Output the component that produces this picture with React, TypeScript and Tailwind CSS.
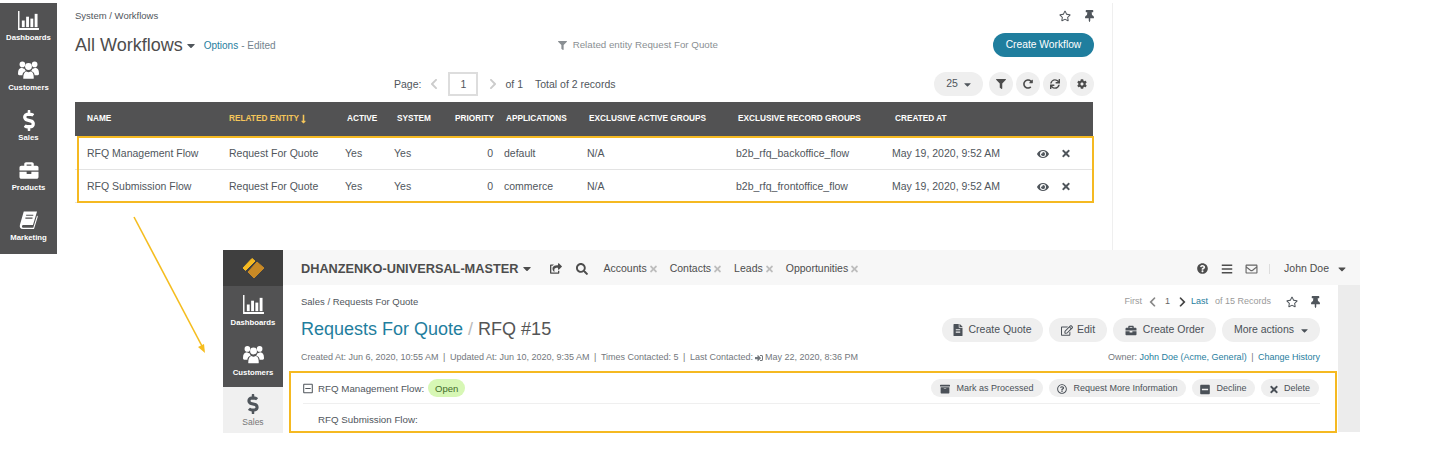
import {
  FaArchive,
  FaBars,
  FaBriefcase,
  FaCaretDown,
  FaChevronLeft,
  FaChevronRight,
  FaCog,
  FaDollarSign,
  FaEye,
  FaFileAlt,
  FaFilter,
  FaLongArrowAltDown,
  FaMinusSquare,
  FaQuestionCircle,
  FaRedoAlt,
  FaRegEdit,
  FaRegEnvelope,
  FaRegMinusSquare,
  FaRegQuestionCircle,
  FaRegStar,
  FaSearch,
  FaShareSquare,
  FaSignInAlt,
  FaSync,
  FaThumbtack,
  FaTimes,
} from 'react-icons/fa';

const ChartIcon = ({ className }: { className?: string }) => (
  <svg className={className} viewBox="0 0 22 20" fill="currentColor">
    <path d="M0 0h1.5v18H22v2H0z" />
    <rect x="4" y="10" width="3" height="7" />
    <rect x="8.5" y="6" width="3" height="11" />
    <rect x="13" y="8" width="3" height="9" />
    <rect x="17.5" y="3" width="3" height="14" />
  </svg>
);

const UsersIcon = ({ className }: { className?: string }) => (
  <svg className={className} viewBox="0 0 24 20" fill="currentColor">
    <circle cx="5" cy="3.6" r="3.2" />
    <circle cx="19" cy="3.6" r="3.2" />
    <circle cx="12" cy="6" r="3.9" />
    <path d="M0 14c0-4 1.5-6.500 4.500-6.500 1 .8 2 1.200 3 1.200.3 1 .8 1.800 1.500 2.500C6.500 12 5.200 13.500 5 16H1.500C.5 16 0 15 0 14z" />
    <path d="M24 14c0-4-1.500-6.500-4.500-6.500-1 .8-2 1.200-3 1.200-.3 1-.8 1.800-1.500 2.500 2.500.8 3.800 2.300 4 4.800h3.500c1 0 1.500-1 1.500-2z" />
    <path d="M6.500 20c-.5 0-.5-.5-.5-1 0-4 1.300-7 3.800-7.300 1.400 1 3 1 4.400 0C17.200 12 18 15 18 19c0 .5 0 1-.5 1z" />
  </svg>
);

const BookIcon = ({ className }: { className?: string }) => (
  <svg className={className} viewBox="0 0 20 20" fill="currentColor">
    <path d="M5 .5h14l-4.300 14.200H4.500c-1.800 0-1.800 3 .2 3H15l4-13 .8 1-4 13.300H4.200C1.300 19 .3 16.800 1 14.500z" />
    <path d="M7.500 4.500h7.500M6.700 7.500h7.500" stroke="#525253" strokeWidth="1.200" />
  </svg>
);

const Logo = () => (
  <svg width="23" height="22" viewBox="0 0 23 22">
    <path d="M10 1.500l3 2.500L3.500 13.500 1 11z" fill="#f5b921" stroke="#f5b921" strokeLinejoin="round" />
    <path d="M15 5l7 6-10 10-6-6z" fill="#c98a26" stroke="#c98a26" strokeLinejoin="round" />
  </svg>
);

const topNav = [
  { label: 'Dashboards', icon: <ChartIcon className="w-[21px] h-[19px]" />, h: 'h-[50px]' },
  { label: 'Customers', icon: <UsersIcon className="w-[21px] h-[18px]" />, h: 'h-[50px]' },
  { label: 'Sales', icon: <FaDollarSign className="w-[14px] h-[21px]" />, h: 'h-[50px]' },
  { label: 'Products', icon: <FaBriefcase className="w-[20px] h-[19px]" />, h: 'h-[50px]' },
  { label: 'Marketing', icon: <BookIcon className="w-[19px] h-[19px]" />, h: 'h-[51px]' },
];

const rows = [
  { name: 'RFQ Management Flow', app: 'default', group: 'b2b_rfq_backoffice_flow' },
  { name: 'RFQ Submission Flow', app: 'commerce', group: 'b2b_rfq_frontoffice_flow' },
];

const gridCols = 'grid grid-cols-[142px_116px_49px_50px_60px_83px_149px_156px_145px_25px_1fr]';

const RoundButton = ({ children }: { children: React.ReactNode }) => (
  <span className="w-[24px] h-[24px] rounded-full bg-[#efefef] flex items-center justify-center text-[#4c4c4c]">
    {children}
  </span>
);

const PillButton = ({ children, className }: { children: React.ReactNode; className: string }) => (
  <span className={`h-[24px] pt-[1px] rounded-full bg-[#efefef] flex items-center justify-center text-[10.5px] text-[#4b5158] ${className}`}>
    {children}
  </span>
);

const SmallAction = ({ icon, label, className }: { icon: React.ReactNode; label: string; className: string }) => (
  <span className={`h-[18px] pt-[2px] rounded-full bg-[#efefef] flex items-center justify-center gap-[6px] text-[9px] text-[#4b5158] ${className}`}>
    {icon}
    {label}
  </span>
);

const Sep = () => <span className="mx-[4.5px] text-[#777]">|</span>;

export default function App() {
  return (
    <div className="relative w-[1445px] h-[471px] bg-white overflow-hidden text-[#50565c] font-['Liberation_Sans',Arial,sans-serif]">
      {/* upper shot: workflow list */}
      <div className="flex h-[250px] pt-[3px]">
        <nav className="w-[57px] h-[251px] shrink-0 bg-[#525253] text-white flex flex-col">
          {topNav.map((item) => (
            <div key={item.label} className={`${item.h} flex flex-col items-center pt-[6px]`}>
              <span className="h-[22px] flex items-center">{item.icon}</span>
              <span className="mt-[2px] text-[7.75px] leading-[10px] font-bold">{item.label}</span>
            </div>
          ))}
        </nav>

        <main className="w-[1056px] border-r border-[#efefef] pl-[18px] pr-[18px]">
          <div className="flex justify-between items-center h-[26px]">
            <span className="text-[9.5px] mt-[1px]">System / Workflows</span>
            <span className="flex items-center gap-[14px] text-[#50565c]">
              <FaRegStar className="w-[12px] h-[12px]" />
              <FaThumbtack className="w-[9px] h-[12px]" />
            </span>
          </div>

          <div className="flex items-center h-[30px] mt-[1px]">
            <span className="text-[18px] text-[#4d4d4d]">All Workflows</span>
            <FaCaretDown className="ml-[4px] w-[8px] h-[13px]" />
            <span className="ml-[9px] text-[10px] text-[#1f7e9e]">Options</span>
            <span className="ml-[3px] text-[10px] text-[#73838e]">- Edited</span>
            <span className="ml-[282px] flex items-center gap-[6px] text-[9.75px] text-[#8a8f93]">
              <FaFilter className="w-[9px] h-[9px]" />
              Related entity Request For Quote
            </span>
            <span className="ml-auto w-[101px] h-[24px] rounded-full bg-[#1f7e9e] text-white text-[10.25px] flex items-center justify-center">
              Create Workflow
            </span>
          </div>

          <div className="flex items-center h-[24px] mt-[12px]">
            <span className="ml-[319px] pt-[2px] text-[10.5px]">Page:</span>
            <FaChevronLeft className="ml-[9px] w-[8px] h-[12px] text-[#ccc]" />
            <span className="ml-[10px] w-[30px] h-[24px] pt-[1px] border-2 border-[#ddd] text-[10.5px] flex items-center justify-center">1</span>
            <FaChevronRight className="ml-[11px] w-[8px] h-[12px] text-[#ccc]" />
            <span className="ml-[8px] pt-[2px] text-[10.5px]">of 1</span>
            <span className="ml-[12px] pt-[2px] text-[10.5px]">Total of 2 records</span>
            <span className="ml-auto w-[49px] h-[24px] rounded-full bg-[#efefef] text-[10.5px] flex items-center justify-center gap-[6px]">
              25 <FaCaretDown className="w-[7px] h-[11px]" />
            </span>
            <span className="ml-[6px] flex gap-[3px]">
              <RoundButton><FaFilter className="w-[10px] h-[10px]" /></RoundButton>
              <RoundButton><FaRedoAlt className="w-[10px] h-[10px]" /></RoundButton>
              <RoundButton><FaSync className="w-[10px] h-[10px]" /></RoundButton>
              <RoundButton><FaCog className="w-[10px] h-[10px]" /></RoundButton>
            </span>
          </div>

          <div className="mt-[6px] w-[1018px]">
            <div className={`${gridCols} h-[34px] items-center bg-[#525253] pl-[12px] text-white text-[8.25px] font-bold`}>
              <span>NAME</span>
              <span className="flex items-center text-[#f5c65a]">
                RELATED ENTITY <FaLongArrowAltDown className="ml-[1px] w-[7px] h-[10px]" />
              </span>
              <span className="ml-[2px]">ACTIVE</span>
              <span className="ml-[3px]">SYSTEM</span>
              <span className="ml-[11px] whitespace-nowrap">PRIORITY</span>
              <span className="ml-[2px]">APPLICATIONS</span>
              <span className="ml-[2px]">EXCLUSIVE ACTIVE GROUPS</span>
              <span className="ml-[2px]">EXCLUSIVE RECORD GROUPS</span>
              <span className="ml-[3px]">CREATED AT</span>
            </div>
            <div className="pt-[1px]">
              {rows.map((row) => (
                <div key={row.name} className={`${gridCols} h-[33px] pt-[1px] items-center border-b border-[#e3e3e3] pl-[12px] text-[10.5px]`}>
                  <span>{row.name}</span>
                  <span>Request For Quote</span>
                  <span>Yes</span>
                  <span>Yes</span>
                  <span className="text-right pr-[11px]">0</span>
                  <span>{row.app}</span>
                  <span>N/A</span>
                  <span>{row.group}</span>
                  <span>May 19, 2020, 9:52 AM</span>
                  <FaEye className="w-[12px] h-[12px]" />
                  <FaTimes className="w-[8px] h-[11px]" />
                </div>
              ))}
            </div>
          </div>
        </main>
      </div>

      {/* lower shot: RFQ view */}
      <div className="ml-[223px] w-[1137px] h-[183px] flex">
        <aside className="w-[60px] shrink-0 flex flex-col">
          <div className="h-[36px] bg-[#3f3f3f] flex items-center justify-center"><Logo /></div>
          <div className="h-[50px] bg-[#525253] text-white flex flex-col items-center pt-[9px]">
            <ChartIcon className="w-[21px] h-[19px]" />
            <span className="mt-[4px] text-[7.75px] leading-[10px] font-bold">Dashboards</span>
          </div>
          <div className="h-[51px] bg-[#525253] text-white flex flex-col items-center pt-[9px]">
            <UsersIcon className="w-[21px] h-[19px]" />
            <span className="mt-[4px] text-[7.75px] leading-[10px] font-bold">Customers</span>
          </div>
          <div className="flex-1 bg-[#f0f0f0] text-[#50565c] flex flex-col items-center pt-[7px]">
            <FaDollarSign className="w-[14px] h-[20px]" />
            <span className="mt-[3px] text-[8.5px] leading-[10px] text-[#777]">Sales</span>
          </div>
        </aside>

        <div className="flex-1 flex flex-col">
          <header className="h-[36px] pt-[2px] bg-[#f7f7f7] flex items-center pl-[18px] pr-[14px] text-[#4d4d4d]">
            <span className="text-[12.75px] font-bold">DHANZENKO-UNIVERSAL-MASTER</span>
            <FaCaretDown className="ml-[5px] w-[8px] h-[13px]" />
            <FaShareSquare className="ml-[19px] w-[12px] h-[11px]" />
            <FaSearch className="ml-[14px] w-[12px] h-[12px]" />
            <div className="ml-[15px] flex gap-[13px]">
              {['Accounts', 'Contacts', 'Leads', 'Opportunities'].map((t) => (
                <span key={t} className="flex items-center text-[10.5px]">
                  {t}
                  <FaTimes className="ml-[3px] w-[7px] h-[10px] text-[#bdbdbd]" />
                </span>
              ))}
            </div>
            <FaQuestionCircle className="ml-auto w-[11px] h-[11px]" />
            <FaBars className="ml-[13px] w-[12px] h-[12px]" />
            <FaRegEnvelope className="ml-[12px] w-[13px] h-[12px] text-[#666]" />
            <span className="ml-[11px] h-[10px] border-l border-[#ddd]" />
            <span className="ml-[14px] text-[10.5px]">John Doe</span>
            <FaCaretDown className="ml-[9px] w-[8px] h-[12px]" />
          </header>

          <div className="flex-1 flex">
            <div className="w-[1055px] pl-[18px]">
              <div className="flex items-center justify-between h-[31px] pr-[18px] pt-[3px]">
                <span className="text-[9.5px]">Sales / Requests For Quote</span>
                <span className="flex items-center text-[9px] text-[#9a9a9a]">
                  First
                  <FaChevronLeft className="ml-[7px] w-[7px] h-[12px] text-[#888]" />
                  <span className="ml-[9px] text-[#666]">1</span>
                  <FaChevronRight className="ml-[9px] w-[7px] h-[12px] text-[#444]" />
                  <span className="ml-[5px] text-[#1f7e9e]">Last</span>
                  <span className="ml-[7px]">of 15 Records</span>
                  <FaRegStar className="ml-[15px] w-[12px] h-[12px] text-[#50565c]" />
                  <FaThumbtack className="ml-[13px] w-[9px] h-[12px] text-[#50565c]" />
                </span>
              </div>

              <div className="flex items-center h-[29px] -mt-[1px] pr-[18px]">
                <span className="text-[18px] text-[#1f7e9e]">Requests For Quote</span>
                <span className="ml-[5px] text-[18px] text-[#bbb]">/</span>
                <span className="ml-[5px] text-[18px] text-[#555]">RFQ #15</span>
                <span className="ml-auto flex gap-[6px]">
                  <PillButton className="w-[101px] gap-[5px]"><FaFileAlt className="w-[10px] h-[12px]" />Create Quote</PillButton>
                  <PillButton className="w-[58px] gap-[4px]"><FaRegEdit className="w-[12px] h-[11px]" />Edit</PillButton>
                  <PillButton className="w-[103px] gap-[6px]"><FaBriefcase className="w-[12px] h-[11px]" />Create Order</PillButton>
                  <PillButton className="w-[98px] gap-[7px]">More actions<FaCaretDown className="w-[7px] h-[11px]" /></PillButton>
                </span>
              </div>

              <div className="flex items-center justify-between h-[27px] pr-[18px] text-[9px] text-[#73787d]">
                <span className="flex items-center">
                  Created At: Jun 6, 2020, 10:55 AM<Sep />Updated At: Jun 10, 2020, 9:35 AM<Sep />Times Contacted: 5<Sep />Last Contacted:
                  <FaSignInAlt className="mx-[2px] w-[8px] h-[8px]" /> May 22, 2020, 8:36 PM
                </span>
                <span className="flex items-center">
                  Owner:&nbsp;<span className="text-[#1f7e9e]">John Doe (Acme, General)</span><Sep />
                  <span className="text-[#1f7e9e]">Change History</span>
                </span>
              </div>

              <div className="relative -ml-[12px] w-[1048px] h-[62px] border-2 border-[#f5b921]">
                <div className="ml-[12px] mr-[15px] h-[31px] flex items-center border-b border-[#efefef]">
                  <FaRegMinusSquare className="w-[10px] h-[11px]" />
                  <span className="ml-[5px] pt-[2px] text-[9.75px]">RFQ Management Flow:</span>
                  <span className="ml-[4px] w-[37px] h-[18px] pt-[2px] rounded-full bg-[#d7f7b5] text-[#3f6b2b] text-[9.5px] flex items-center justify-center">Open</span>
                  <span className="ml-auto flex gap-[6px] mr-[1px]">
                    <SmallAction className="w-[112px]" icon={<FaArchive className="w-[10px] h-[10px]" />} label="Mark as Processed" />
                    <SmallAction className="w-[137px]" icon={<FaRegQuestionCircle className="w-[10px] h-[10px]" />} label="Request More Information" />
                    <SmallAction className="w-[63px]" icon={<FaMinusSquare className="w-[10px] h-[11px]" />} label="Decline" />
                    <SmallAction className="w-[58px]" icon={<FaTimes className="w-[8px] h-[11px]" />} label="Delete" />
                  </span>
                </div>
                <div className="pl-[27px] h-[29px] pt-[4px] flex items-center text-[9.75px]">RFQ Submission Flow:</div>
              </div>
            </div>
            <div className="flex-1 bg-[#ececec] mb-px" />
          </div>
        </div>
      </div>

      {/* annotations that lie over both shots */}
      <div className="absolute left-[77px] top-[136px] w-[1017px] h-[67px] border-2 border-[#f5b921] pointer-events-none" />
      <svg className="absolute left-[130px] top-[214px] pointer-events-none" width="80" height="142" viewBox="0 0 80 142" fill="none">
        <path d="M4 3L73 134" stroke="#f5bd1f" strokeWidth="1.6" />
        <path d="M75 139L68 133L74 130Z" fill="#f5bd1f" />
      </svg>
    </div>
  );
}
